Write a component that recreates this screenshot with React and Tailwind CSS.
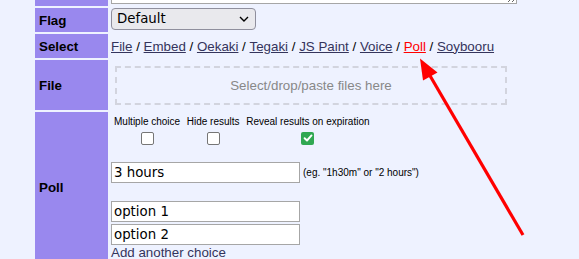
import React from "react";

function Box({ checked }) {
  if (checked) {
    return (
      <span className="mt-[4.5px] flex h-[13px] w-[13px] items-center justify-center rounded-[2px] bg-[#30a852]">
        <svg width="10" height="10" viewBox="0 0 10 10">
          <path d="M1.6 5.2 L4 7.5 L8.5 2.4" fill="none" stroke="#fff" strokeWidth="1.9" strokeLinecap="round" strokeLinejoin="round" />
        </svg>
      </span>
    );
  }
  return <span className="mt-[4.5px] block h-[13px] w-[13px] rounded-[2px] border border-[#767676] bg-white" />;
}

export default function App() {
  const links = ["File", "Embed", "Oekaki", "Tegaki", "JS Paint", "Voice", "Poll", "Soybooru"];
  return (
    <div className="relative h-[259px] w-[579px] overflow-hidden bg-[#eef2ff] font-['Liberation_Sans',Arial,sans-serif] text-[13.33px] text-black">
      <div className="ml-[35px] mt-[-60px] flex flex-col gap-[2px]">
        {/* textarea row */}
        <div className="flex h-[66px] gap-[2px]">
          <div className="w-[73px] bg-[#9988ee]" />
          <div className="flex items-start pl-[1px]">
            <textarea
              readOnly
              className="block h-[64px] w-[406px] border border-[#a6a6a6] bg-white"
            />
          </div>
        </div>
        {/* Flag */}
        <div className="flex h-[24px] gap-[2px]">
          <div className="flex w-[73px] items-center bg-[#9988ee] pl-[4px] pt-[1px] font-bold">Flag</div>
          <div className="flex items-start pl-[1px]">
            <div className="flex h-[22px] w-[145px] items-center justify-between rounded-[4px] border border-[#8f8f9d] bg-[#e9e9ed] pl-[5px] pr-[6px] font-['DejaVu_Sans',sans-serif] text-[13.33px]">
              <span>Default</span>
              <svg width="10" height="6" viewBox="0 0 10 6">
                <path d="M1 1 L5 5 L9 1" fill="none" stroke="#000" strokeWidth="1.4" />
              </svg>
            </div>
          </div>
        </div>
        {/* Select */}
        <div className="flex h-[24px] gap-[2px]">
          <div className="flex w-[73px] items-center bg-[#9988ee] pl-[4px] pt-[1px] font-bold">Select</div>
          <div className="flex items-center pl-[1px] pt-[1px] whitespace-pre">
            {links.map((l, i) => (
              <React.Fragment key={l}>
                {i > 0 && <span> / </span>}
                <span className={l === "Poll" ? "text-[#ff0000] underline" : "text-[#34345c] underline"}>{l}</span>
              </React.Fragment>
            ))}
          </div>
        </div>
        {/* File */}
        <div className="flex h-[50px] gap-[2px]">
          <div className="flex w-[73px] items-center bg-[#9988ee] pl-[4px] pt-[1px] font-bold">File</div>
          <div className="pl-[5px] pt-[6px]">
            <div className="flex h-[39px] w-[392px] items-center justify-center border-2 border-dashed border-[#d2d4de] text-[#888888]">
              Select/drop/paste files here
            </div>
          </div>
        </div>
        {/* Poll */}
        <div className="flex gap-[2px]">
          <div className="flex w-[73px] items-center bg-[#9988ee] pl-[4px] pt-[1px] font-bold">Poll</div>
          <div className="flex flex-col items-start pb-[2px]">
            <div className="flex gap-[6.6px] pl-[4px] pt-[3.5px] text-[10px] leading-[11.5px]">
              <div className="flex flex-col items-center">
                <span>Multiple choice</span>
                <Box />
              </div>
              <div className="flex flex-col items-center">
                <span>Hide results</span>
                <Box />
              </div>
              <div className="flex flex-col items-center">
                <span>Reveal results on expiration</span>
                <Box checked />
              </div>
            </div>
            <div className="ml-[1px] mt-[17.5px] flex items-center gap-[3px]">
              <div className="flex h-[21px] w-[189px] items-center border border-[#a6a6a6] bg-white px-[2px] font-['DejaVu_Sans',sans-serif] text-[13.33px]">
                3 hours
              </div>
              <span className="text-[10px]">(eg. "1h30m" or "2 hours")</span>
            </div>
            <div className="ml-[1px] mt-[18px] flex h-[21px] w-[189px] items-center border border-[#a6a6a6] bg-white px-[2px] font-['DejaVu_Sans',sans-serif] text-[13.33px]">
              option 1
            </div>
            <div className="ml-[1px] mt-[2px] flex h-[21px] w-[189px] items-center border border-[#a6a6a6] bg-white px-[2px] font-['DejaVu_Sans',sans-serif] text-[13.33px]">
              option 2
            </div>
            <div className="ml-[1px] h-[15px] leading-[15px] text-[#34345c]">Add another choice</div>
          </div>
        </div>
      </div>
      <svg className="pointer-events-none absolute left-0 top-0" width="579" height="259" viewBox="0 0 579 259">
        <line x1="523" y1="235" x2="429" y2="74" stroke="#ff0000" strokeWidth="3.2" />
        <polygon points="420,58.5 437.5,72.5 423,80.5" fill="#ff0000" />
      </svg>
    </div>
  );
}
